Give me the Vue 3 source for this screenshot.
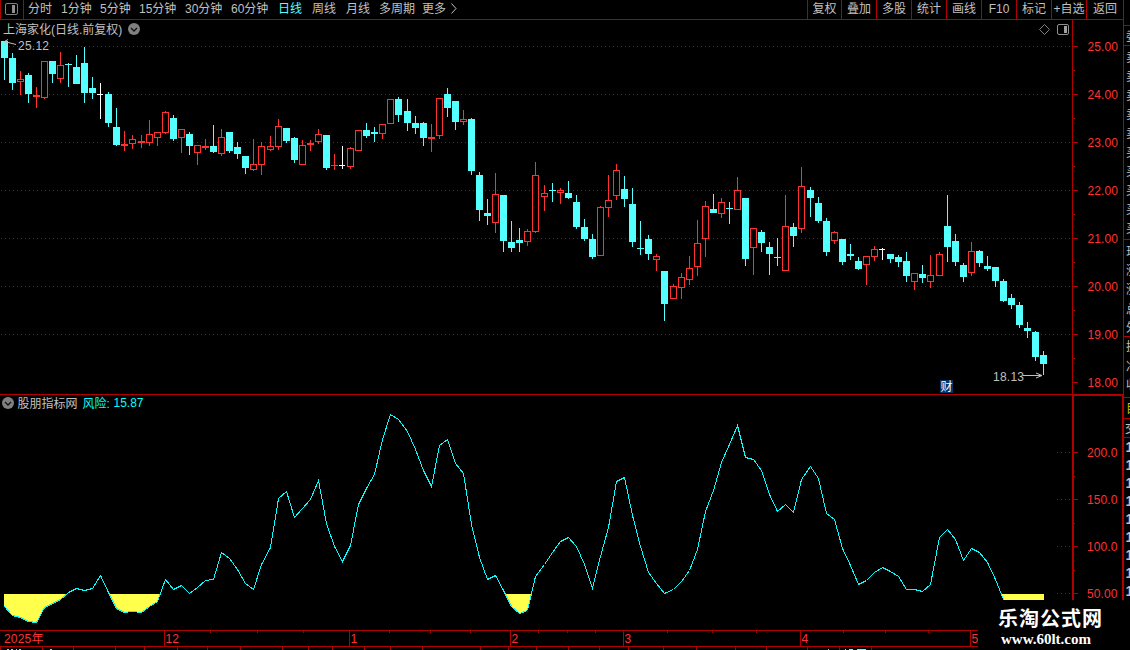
<script setup>
const periods = ['分时', '1分钟', '5分钟', '15分钟', '30分钟', '60分钟', '日线', '周线', '月线', '多周期', '更多']
const actions = ['复权', '叠加', '多股', '统计', '画线', 'F10', '标记', '+自选', '返回']

// kind (d = down, u = up, w = flat), centre x, high, body top, body bottom, low
const candles = `d4 41 41 58 80|d12 53 58 83 90|u20 71 79 82 95|d28 73 75 94 103|u36 87 95 97 108|u44 61 61 98 99|d52 61 61 74 83
u60 52 65 79 83|d68 63 64 65 87|d76 55 67 84 84|d84 47 63 93 103|d92 77 88 93 99|w100 83 94 95 119|d108 92 94 123 127
d116 108 127 145 146|u124 131 144 146 151|u132 135 139 144 149|u141 135 141 143 148|u149 120 134 143 146|u157 132 132 138 146
u165 111 112 133 134|d173 115 118 139 141|u181 129 129 138 153|d189 132 134 146 155|u197 145 145 153 165|u205 139 146 148 150
d213 125 146 152 153|u221 129 137 154 156|d229 132 132 151 153|d237 142 147 154 159|d245 156 156 168 174|u253 139 164 170 171
u261 142 146 165 175|u270 136 146 150 151|u278 119 126 147 150|d286 128 128 141 143|d294 137 138 160 163|u302 140 145 165 165
u310 140 143 145 151|u318 129 134 142 144|d326 135 135 168 170|u334 154 165 166 170|w342 146 165 166 169|u350 147 148 167 169
u358 130 130 151 151|d366 123 130 136 138|d374 127 132 134 142|u382 124 124 134 139|u390 99 99 124 124|d398 97 99 115 122
d407 99 111 123 131|d415 116 123 128 134|d423 122 123 138 146|u431 124 137 139 152|u439 98 98 136 139|d447 88 94 108 117
d455 101 101 122 130|u463 110 119 122 125|d471 118 119 171 175|d479 172 175 210 221|d487 199 213 216 225|u495 173 194 223 233
d503 195 195 241 252|d511 221 242 248 252|d519 228 240 243 252|u527 229 231 242 246|u535 162 175 232 233|u544 185 193 197 211
d552 183 190 191 202|u560 188 190 193 204|d568 181 193 198 199|d576 195 202 227 229|d584 219 227 239 241|d592 234 239 257 259
u600 206 207 256 256|u608 175 200 208 217|u616 164 170 196 200|d624 176 189 199 207|d632 188 204 242 247|d640 221 248 249 255
d648 235 239 254 260|u656 254 256 260 271|d664 271 271 304 321|u673 284 286 299 299|u681 273 277 288 299|u689 256 268 280 285
u697 220 243 267 276|u705 201 206 239 257|d713 194 209 213 213|u721 198 202 214 218|d729 202 208 209 224|u737 177 190 210 210
d745 198 198 259 266|u753 228 228 248 275|d761 230 232 243 252|d769 242 247 254 275|d777 238 257 258 266|u785 195 226 271 271
d793 223 227 236 247|u801 167 186 229 233|d810 187 190 198 217|d818 197 203 221 223|d826 218 221 252 256|u834 231 232 241 244
d842 239 239 262 265|d850 244 254 256 260|d858 257 261 269 270|u866 256 256 265 285|u874 246 249 257 261|w882 248 249 250 260
d890 254 254 259 263|d898 255 257 262 267|d906 252 261 276 282|u914 273 273 282 290|d922 265 274 278 283|u930 255 275 282 288
u939 252 254 276 276|d947 195 226 247 262|d955 234 241 262 266|d963 263 265 277 282|u971 242 251 273 276|d979 250 251 263 267
d987 256 266 269 271|d995 267 267 281 287|d1003 279 281 301 302|d1011 294 298 305 309|d1019 302 305 325 328|d1027 322 328 331 338
d1035 331 332 357 361|d1043 351 355 364 375`
  .split(/[|\n]/)
  .map((s) => {
    const [x, hi, top, bot, lo] = s.slice(1).split(' ').map(Number)
    return { kind: s[0], x, hi, top, bot, lo }
  })

const riskY = [
  606, 615, 617, 621, 622, 607, 603, 599, 592, 588, 590, 588, 575, 592, 608, 612, 611, 612, 606, 601, 579, 589, 585, 593, 587, 580,
  579, 552, 558, 569, 583, 589, 564, 547, 498, 491, 517, 508, 499, 480, 523, 546, 561, 545, 504, 488, 474, 439, 414, 419, 431, 449,
  470, 486, 445, 439, 463, 473, 524, 557, 579, 575, 590, 606, 613, 610, 576, 564, 552, 541, 537, 546, 564, 588, 556, 527, 481, 477,
  515, 546, 572, 583, 593, 589, 581, 570, 549, 511, 490, 462, 444, 425, 457, 459, 470, 494, 511, 504, 512, 479, 466, 478, 513, 519,
  548, 565, 584, 580, 572, 567, 571, 576, 589, 589, 591, 584, 537, 529, 539, 560, 548, 552, 562, 579, 599, 612, 618, 622, 624, 620
]
const riskLine = riskY.map((y, i) => `${candles[i].x + 0.5},${y + 0.5}`).join(' ')
const riskArea = `4,400 4,606 ${riskLine} 1044,620 1044,400`

const prices = [25, 24, 23, 22, 21, 20, 19, 18].map((v, i) => ({ text: v.toFixed(2), y: 46 + i * 48 }))
const levels = ['200.0', '150.0', '100.0', '50.00'].map((text, i) => ({ text, y: 452 + i * 47 }))
const months = [[164, '12'], [349, '1'], [510, '2'], [623, '3'], [800, '4'], [970, '5']]
const weekTicks = [210, 257, 303, 389, 430, 470, 538, 567, 595, 667, 712, 756, 843, 885, 928]
const footTicks = [0, 42, 73, 115, 144, 177, 207, 240, 282, 308, 332, 364, 390, 422, 480, 508, 536, 568, 599, 628, 663, 696, 735, 766, 807, 839, 871]
const sideLabels = [['委', 41], ['卖', 62], ['卖', 81], ['卖', 100], ['卖', 119], ['卖', 138], ['买', 157], ['买', 176], ['买', 195], ['买', 214], ['买', 233], ['现', 256], ['涨', 275], ['涨', 294], ['总', 314], ['外', 332], ['换', 351], ['净', 371], ['收', 389]]
const sideRules = [25, 45, 239, 336, 397, 418, 437]
</script>

<template>
  <div class="terminal">
    <header class="toolbar">
      <div class="dock">
        <svg width="13" height="12" viewBox="0 0 13 12">
          <rect x=".5" y=".5" width="12" height="11" rx="1.5" fill="none" stroke="#808080" />
          <rect x="7" y="2" width="3" height="8" fill="#909090" />
        </svg>
      </div>
      <nav class="periods">
        <span v-for="p in periods" :key="p" :class="{ active: p === '日线' }">{{ p }}</span>
        <svg class="more" width="6" height="11" viewBox="0 0 6 11"><path d="M.5 .5L5 5.5L.5 10.5" fill="none" stroke="#c0c0c0" /></svg>
      </nav>
      <div class="actions">
        <span v-for="a in actions" :key="a">{{ a }}</span>
      </div>
    </header>

    <main class="stage">
      <svg class="chart" width="1130" height="630" viewBox="0 20 1130 630">
        <defs>
          <clipPath id="low"><rect x="4" y="594" width="1040" height="40" /></clipPath>
        </defs>

        <g class="grid">
          <line v-for="p in prices.slice(0, 7)" :key="p.y" x1="1" x2="1072" :y1="p.y + 0.5" :y2="p.y + 0.5" />
          <line v-for="l in levels" :key="l.y" x1="1057" x2="1072" :y1="l.y + 0.5" :y2="l.y + 0.5" />
        </g>

        <g class="crisp">
          <g v-for="c in candles" :key="c.x" :class="c.kind">
            <template v-if="c.kind === 'u'">
              <rect :x="c.x" :y="c.hi" width="1" :height="c.top - c.hi" />
              <rect :x="c.x" :y="c.bot" width="1" :height="c.lo - c.bot" />
              <rect v-if="c.bot - c.top < 3" :x="c.x - 3" :y="c.top" width="7" :height="c.bot - c.top" />
              <rect v-else class="hollow" :x="c.x - 2.5" :y="c.top + 0.5" width="6" :height="c.bot - c.top - 1" />
            </template>
            <template v-else>
              <rect :x="c.x" :y="c.hi" width="1" :height="c.lo - c.hi" />
              <rect :x="c.x - 3" :y="c.top" :width="c.kind === 'w' ? 6 : 7" :height="c.bot - c.top" />
            </template>
          </g>
          <polygon :points="riskArea" fill="#ffff4c" clip-path="url(#low)" />
          <polyline :points="riskLine" fill="none" stroke="#00ffff" />
        </g>

        <!-- frame and scales -->
        <g fill="#b00000" class="crisp">
          <rect x="0" y="394" width="1124" height="1" />
          <rect x="1072" y="394" width="52" height="2" />
          <rect x="1072" y="20" width="1" height="374" />
          <rect x="1072" y="394" width="2" height="206" />
          <rect x="1123" y="20" width="1" height="374" />
          <rect x="1122" y="394" width="2" height="206" />
          <template v-for="p in prices" :key="p.y">
            <rect x="1073" :y="p.y" width="5" height="1" />
            <rect v-if="p.y < 380" x="1073" :y="p.y + 24" width="2" height="1" />
          </template>
          <template v-for="(l, i) in levels" :key="l.y">
            <rect x="1074" :y="l.y" width="4" height="1" />
            <rect v-if="i < 3" x="1074" :y="l.y + 24" width="1" height="1" />
          </template>
          <rect x="0" y="630" width="978" height="1" />
          <rect x="0" y="646" width="978" height="1" />
          <rect v-for="m in months" :key="m[0]" :x="m[0]" y="630" width="1" height="16" />
          <rect v-for="t in weekTicks" :key="t" :x="t" y="631" width="1" height="2" />
          <rect v-for="t in footTicks" :key="t" :x="t" y="647" width="1" height="3" />
          <rect v-for="r in sideRules" :key="r" x="1124" :y="r" width="6" height="1" />
        </g>
        <path class="crisp" fill="#c0c0c0" d="M7 649h2v1h-2zM11 649h2v1h-2zM16 649h1v1h-1zM19 649h2v1h-2zM50 649h2v1h-2zM828 649h1v1h-1z" />
        <path class="crisp" fill="#54ffff" d="M845 649h1v1h-1zM849 649h4v1h-4zM857 649h9v1h-9z" />

        <g class="scale">
          <text v-for="p in prices" :key="p.y" x="1087.5" :y="p.y + 5" textLength="30.5">{{ p.text }}</text>
          <text v-for="l in levels" :key="l.y" x="1087" :y="l.y + 5" textLength="30.5">{{ l.text }}</text>
          <text x="4" y="643" textLength="39.500">2025年</text>
          <text v-for="m in months" :key="m[0]" :x="m[0] + 1.5" y="643">{{ m[1] }}</text>
        </g>

        <!-- captions -->
        <g class="label">
          <text x="3" y="34">上海家化(日线.前复权)</text>
          <text x="18" y="50" textLength="31">25.12</text>
          <text x="993" y="381" textLength="31">18.13</text>
          <text x="17.500" y="408">股朋指标网</text>
          <text class="cyan" x="82.500" y="408">风险:</text>
          <text class="cyan" x="113.5" y="407" textLength="30">15.87</text>
        </g>
        <g fill="none" stroke="#c0c0c0">
          <path d="M4.500 41.500L16 44.500M8 39.500L4.500 41.500L6.500 45" />
          <path d="M1023 375.500H1042M1036 373L1042 375.500L1036 378" />
        </g>
        <g v-for="c in [[134, 29], [8, 403]]" :key="c[0]">
          <circle :cx="c[0]" :cy="c[1]" r="6" fill="#808080" />
          <path :d="`M${c[0] - 3} ${c[1] - 1}l3 3l3 -3`" fill="none" stroke="#101010" stroke-width="1.3" />
        </g>
        <path d="M1044.500 24.500l5 5l-5 5l-5 -5z" fill="none" stroke="#808080" />
        <rect x="1057.500" y="24.500" width="11" height="10" rx="1.5" fill="none" stroke="#909090" />
        <rect x="1064" y="26" width="3" height="7" fill="#a0a0a0" />
        <rect x="940" y="380" width="13" height="13" fill="#003468" />
        <text class="badge" x="940.500" y="391">财</text>

        <!-- quote panel, mostly beyond the right edge -->
        <g class="label">
          <text v-for="s in sideLabels" :key="s[1]" x="1126" :y="s[1]">{{ s[0] }}</text>
          <text x="1126" y="413" class="gold">目</text>
          <text x="1125" y="433">交</text>
          <text v-for="n in 9" :key="n" class="count" x="1125.500" :y="434 + n * 18">1</text>
        </g>

        <rect x="978" y="600" width="152" height="50" fill="#000" />
        <text class="brand" x="998" y="626" textLength="104">乐淘公式网</text>
        <text class="site" x="1001" y="644" textLength="90">www.60lt.com</text>
      </svg>
    </main>
  </div>
</template>

<style>
html, body { background: #000; overflow: hidden; }
</style>

<style scoped>
.terminal {
  width: 1130px;
  height: 650px;
  background: #000;
  overflow: hidden;
  color: #c0c0c0;
  font: 12px "Liberation Sans", "Noto Sans CJK SC", sans-serif;
}
.toolbar {
  display: flex;
  box-sizing: border-box;
  width: 1124px;
  height: 20px;
  border: 1px solid #b00000;
  border-top: 0;
  line-height: 19px;
  white-space: nowrap;
}
.dock {
  display: flex;
  box-sizing: border-box;
  width: 23px;
  padding: 3px 0 0 4px;
  border-right: 1px solid #b00000;
}
.periods {
  display: grid;
  flex: 1;
  padding-left: 4px;
  grid-template-columns: 33px 39px 39px 46px 46px 47px 34px 34px 33px 43px 29px 6px;
}
.periods .active { color: #54ffff; }
.more { margin-top: 3px; }
.actions {
  display: grid;
  grid-template-columns: 34px repeat(7, 35px) 37px;
}
.actions span {
  height: 19px;
  border-left: 1px solid #b00000;
  text-align: center;
}
.stage { display: flex; }
.chart { display: block; }
.crisp { shape-rendering: crispEdges; }
.grid line {
  stroke: #b00000;
  stroke-dasharray: 1 3;
  shape-rendering: crispEdges;
}
.d { fill: #54ffff; }
.u { fill: #ff3232; }
.w { fill: #fff; }
.hollow { fill: #000; stroke: #ff3232; }
.scale { fill: #ff3232; }
.label { fill: #c0c0c0; }
.label .cyan { fill: #00ffff; }
.label .gold { fill: #c0c000; }
.count { font-size: 14px; font-weight: bold; }
.badge { fill: #fff; font-size: 12px; }
.brand { fill: #fff; font: bold 20px "Noto Sans CJK SC", sans-serif; }
.site { fill: #fff; font: bold 15px "Liberation Serif", serif; }
</style>
